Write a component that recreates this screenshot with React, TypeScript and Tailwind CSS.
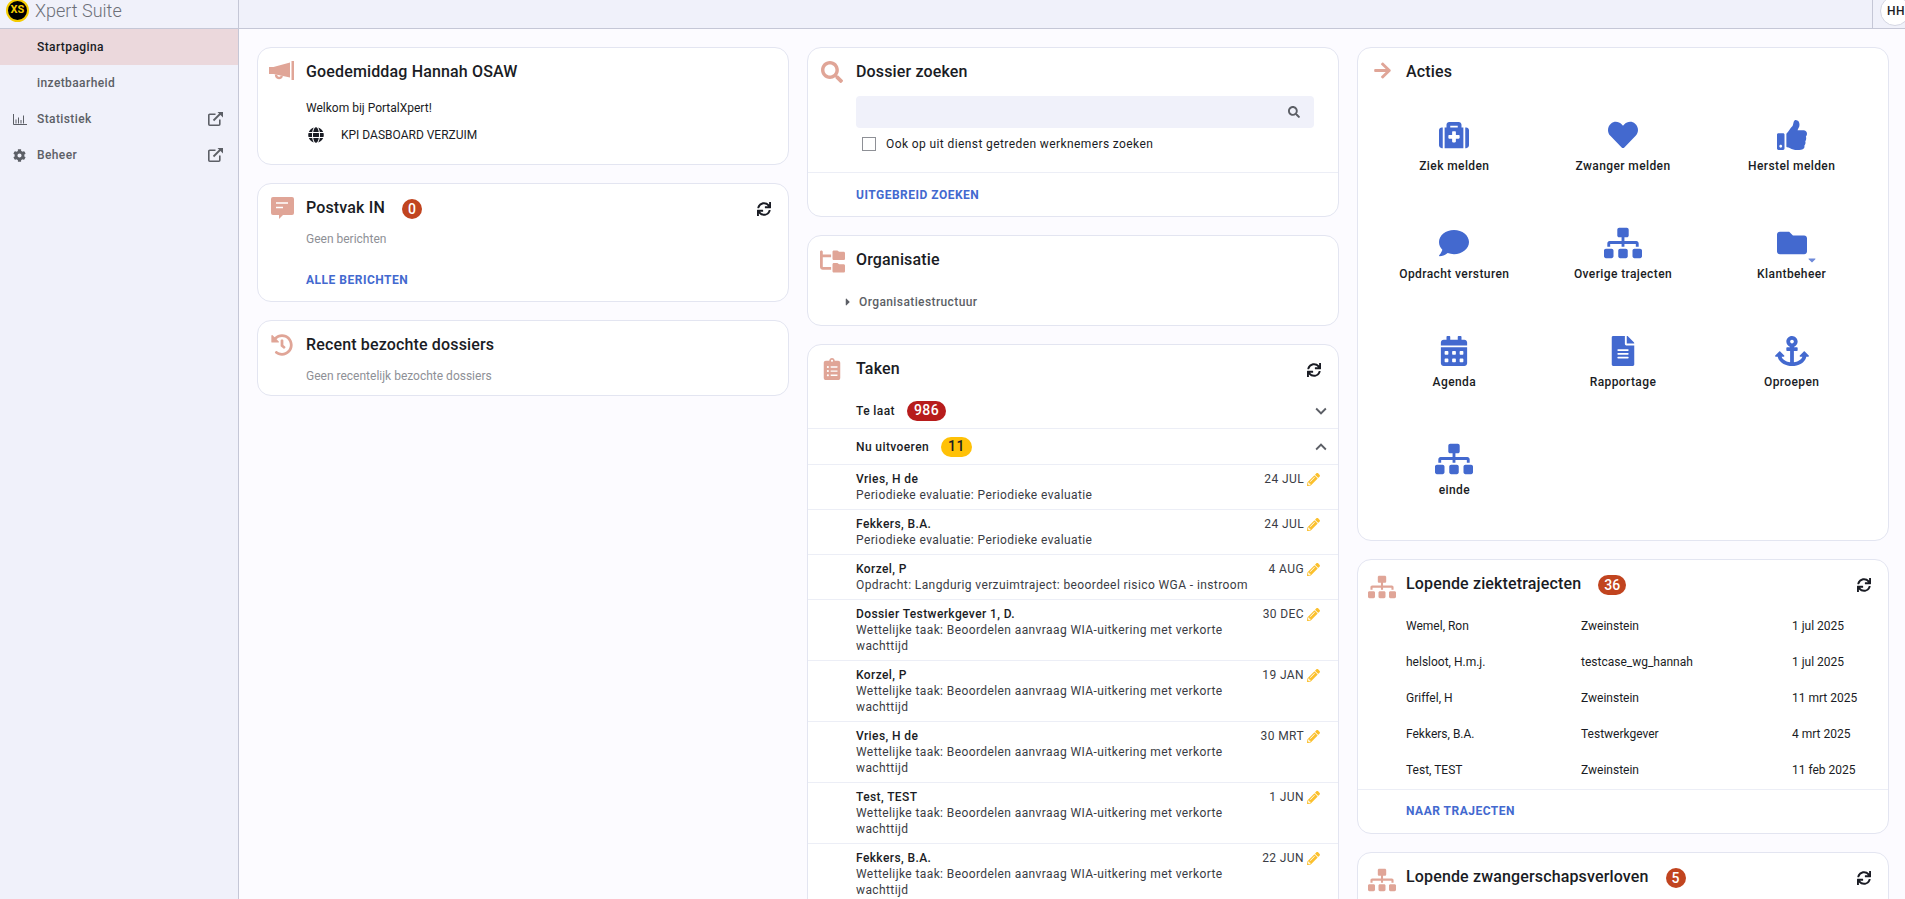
import { FaHistory, FaSearch, FaClipboardList, FaArrowRight, FaSitemap, FaSync, FaMedkit, FaHeart, FaThumbsUp, FaComment, FaFolder, FaCalendarAlt, FaFileAlt, FaAnchor, FaPencilAlt, FaGlobe, FaCog, FaCaretRight, FaCaretDown } from 'react-icons/fa';
import { FaFolderTree } from 'react-icons/fa6';
import { MdKeyboardArrowDown, MdKeyboardArrowUp } from 'react-icons/md';
import type { ReactNode } from 'react';

function Card({ icon, title, badge, refresh, className, children }: { icon: ReactNode; title: string; badge?: string; refresh?: boolean; className?: string; children?: ReactNode }) {
  return (
    <div className={`relative bg-white border border-[#e3e5f1] rounded-[14px] ${className ?? ''}`}>
      <div className="absolute left-0 top-[13px] w-[48px] flex justify-center text-[#e0a597]">{icon}</div>
      <div className="flex items-center h-[24px] ml-[48px] mt-[12px] absolute top-0 left-0">
        <span className="text-[16px] font-medium tracking-[0.15px] text-[#1a1c24] whitespace-nowrap">{title}</span>
        {badge && <span className="relative top-[1px] ml-[17px] h-[20px] px-[6px] min-w-[20px] rounded-[10px] flex items-center justify-center text-[14px] font-medium text-white bg-[#c1441f]">{badge}</span>}
      </div>
      {refresh && <FaSync className="absolute right-[17px] top-[18px] text-[#1a1c24]" size={14} />}
      {children}
    </div>
  );
}

const tasks = [
  ['Vries, H de', 'Periodieke evaluatie: Periodieke evaluatie', '24 JUL'],
  ['Fekkers, B.A.', 'Periodieke evaluatie: Periodieke evaluatie', '24 JUL'],
  ['Korzel, P', 'Opdracht: Langdurig verzuimtraject: beoordeel risico WGA - instroom', '4 AUG'],
  ['Dossier Testwerkgever 1, D.', 'Wettelijke taak: Beoordelen aanvraag WIA-uitkering met verkorte wachttijd', '30 DEC'],
  ['Korzel, P', 'Wettelijke taak: Beoordelen aanvraag WIA-uitkering met verkorte wachttijd', '19 JAN'],
  ['Vries, H de', 'Wettelijke taak: Beoordelen aanvraag WIA-uitkering met verkorte wachttijd', '30 MRT'],
  ['Test, TEST', 'Wettelijke taak: Beoordelen aanvraag WIA-uitkering met verkorte wachttijd', '1 JUN'],
  ['Fekkers, B.A.', 'Wettelijke taak: Beoordelen aanvraag WIA-uitkering met verkorte wachttijd', '22 JUN'],
];

const trajecten = [
  ['Wemel, Ron', 'Zweinstein', '1 jul 2025'],
  ['helsloot, H.m.j.', 'testcase_wg_hannah', '1 jul 2025'],
  ['Griffel, H', 'Zweinstein', '11 mrt 2025'],
  ['Fekkers, B.A.', 'Testwerkgever', '4 mrt 2025'],
  ['Test, TEST', 'Zweinstein', '11 feb 2025'],
];

const acties: [ReactNode, string][] = [
  [<FaMedkit size={30} />, 'Ziek melden'],
  [<FaHeart size={30} />, 'Zwanger melden'],
  [<FaThumbsUp size={30} />, 'Herstel melden'],
  [<FaComment size={30} />, 'Opdracht versturen'],
  [<FaSitemap size={38} className="translate-y-[4px]" />, 'Overige trajecten'],
  [<div className="relative"><FaFolder size={30} /><FaCaretDown size={12} className="absolute -right-[11px] -bottom-[8px] text-[#6f8ad9]" /></div>, 'Klantbeheer'],
  [<FaCalendarAlt size={30} />, 'Agenda'],
  [<FaFileAlt size={30} />, 'Rapportage'],
  [<FaAnchor size={34} className="translate-y-[2px]" />, 'Oproepen'],
  [<FaSitemap size={38} className="translate-y-[4px]" />, 'einde'],
];

// pijl-uit-vak icoon uit de zijbalk
function ExtIcon() {
  return (
    <svg width="15" height="14" viewBox="0 0 15 14" className="absolute right-[15px]" fill="none" stroke="#5c5f66" strokeWidth="1.6">
      <path d="M7.500 2.200H1.800a1 1 0 0 0-1 1v9a1 1 0 0 0 1 1h9a1 1 0 0 0 1-1V7.500" />
      <path d="M5.500 8.500 12.500 1.500" strokeWidth="1.800" />
      <path d="M9.500 0H15v5.500z" fill="#5c5f66" stroke="none" />
    </svg>
  );
}

function ChartIcon() {
  return (
    <svg width="14" height="11" viewBox="0 0 14 11" fill="none" stroke="currentColor" strokeWidth="1">
      <path d="M.5 0v10.500H14" />
      <path d="M3 5.500v4M5.500 3.500v6M8 6v3.500M10.500 1.500v8" />
    </svg>
  );
}

function HornIcon() {
  return (
    <svg width="26" height="20" viewBox="0 0 26 20" fill="currentColor">
      <path d="M0 6h4.500L21 1.500v15L4.500 13H0z" />
      <path d="M22.500 0H25v19h-2.500z" />
      <path d="M6 13.500h2.400c-.3 1.200.3 2.300 1.500 2.300s1.900-.8 1.700-1.400l2.200.5c.1 1.900-1.500 3.300-3.800 3.300C7.300 18.200 5.600 15.800 6 13.500z" />
    </svg>
  );
}

function MessageIcon() {
  return (
    <svg width="23" height="22" viewBox="0 0 23 22">
      <path d="M2 0h19a2 2 0 0 1 2 2v14a2 2 0 0 1-2 2H12l-4 4v-4H2a2 2 0 0 1-2-2V2a2 2 0 0 1 2-2z" fill="currentColor" />
      <path d="M5 6h12M5 10.500h7" stroke="#fff" strokeWidth="1.600" />
    </svg>
  );
}

function NavItem({ label, icon, active, ext }: { label: string; icon?: ReactNode; active?: boolean; ext?: boolean }) {
  return (
    <div className={`relative h-[36px] flex items-center pl-[37px] text-[12px] font-medium tracking-[0.4px] ${active ? 'bg-[#ebd8dc] text-[#1a1c24]' : 'text-[#5c5f66]'}`}>
      {icon && <span className="absolute left-[13px] text-[#5c5f66]">{icon}</span>}
      {label}
      {ext && <ExtIcon />}
    </div>
  );
}

export default function App() {
  return (
    <div className="relative w-[1905px] h-[899px] overflow-hidden bg-[#fcfbff] [font-family:Roboto,sans-serif]">
      {/* bovenbalk */}
      <div className="absolute left-0 top-0 w-full h-[29px] bg-[#f0f1fa] border-b border-[#c5c7d6] overflow-hidden">
        <div className="absolute left-[6px] -top-[1px] w-[23px] h-[23px] rounded-full bg-black border-2 border-[#f5cc00] flex items-center justify-center text-[11px] font-bold text-[#f5cc00]">XS</div>
        <span className="absolute left-[35px] -top-[1px] text-[18px] font-light text-[#6d7078] leading-[24px]">Xpert Suite</span>
        <div className="absolute left-[238px] top-0 h-[28px] border-l border-[#c5c7d6]" />
        <div className="absolute left-[1872px] top-0 h-[28px] border-l border-[#c5c7d6]" />
        <div className="absolute left-[1880px] -top-[4px] w-[30px] h-[30px] rounded-full bg-white border border-[#d5d7e3] flex items-center pl-[6px] text-[12px] font-medium tracking-[0.4px] text-[#1a1c24]">HH</div>
      </div>

      {/* zijbalk */}
      <div className="absolute left-0 top-[29px] w-[239px] bottom-0 bg-[#f0f1fa] border-r border-[#c5c7d6]">
        <NavItem label="Startpagina" active />
        <NavItem label="inzetbaarheid" />
        <NavItem label="Statistiek" icon={<ChartIcon />} ext />
        <NavItem label="Beheer" icon={<FaCog size={13} />} ext />
      </div>

      {/* kolom 1 */}
      <div className="absolute left-[257px] top-[47px] w-[532px] flex flex-col gap-[18px]">
        <Card icon={<HornIcon />} title="Goedemiddag Hannah OSAW" className="h-[118px]">
          <div className="absolute left-[48px] top-[51px] text-[12px] text-[#1a1c24]">Welkom bij PortalXpert!</div>
          <div className="absolute left-[50px] top-[78px] flex items-center text-[12px] text-[#1a1c24]">
            <FaGlobe size={16} className="mr-[17px]" />KPI DASBOARD VERZUIM
          </div>
        </Card>
        <Card icon={<MessageIcon />} title="Postvak IN" badge="0" refresh className="h-[119px]">
          <div className="absolute left-[48px] top-[46px] text-[12px] text-[#8e9096]">Geen berichten</div>
          <div className="absolute left-[48px] top-[87px] text-[12px] font-bold tracking-[0.5px] text-[#4369cf]">ALLE BERICHTEN</div>
        </Card>
        <Card icon={<FaHistory size={22} />} title="Recent bezochte dossiers" className="h-[76px]">
          <div className="absolute left-[48px] top-[46px] text-[12px] text-[#8e9096]">Geen recentelijk bezochte dossiers</div>
        </Card>
      </div>

      {/* kolom 2 */}
      <div className="absolute left-[807px] top-[47px] w-[532px] flex flex-col gap-[18px]">
        <Card icon={<FaSearch size={22} />} title="Dossier zoeken" className="h-[170px]">
          <div className="absolute left-[48px] right-[24px] top-[48px] h-[32px] rounded-[4px] bg-[#f0f1fa]">
            <FaSearch size={12} className="absolute right-[14px] top-[10px] text-[#5c5f66]" />
          </div>
          <div className="absolute left-[54px] top-[87px] flex items-center text-[12px] text-[#1a1c24] tracking-[0.4px]">
            <span className="w-[14px] h-[14px] bg-white border border-[#8e9096] mr-[10px]" />Ook op uit dienst getreden werknemers zoeken
          </div>
          <div className="absolute left-0 right-0 top-[124px] border-t border-[#eceef6]" />
          <div className="absolute left-[48px] top-[138px] text-[12px] font-bold tracking-[0.5px] text-[#4369cf]">UITGEBREID ZOEKEN</div>
        </Card>
        <Card icon={<FaFolderTree size={25} />} title="Organisatie" className="h-[91px]">
          <div className="absolute left-[34px] top-[57px] flex items-center text-[12px] font-medium tracking-[0.4px] text-[#5c5f66]">
            <FaCaretRight size={12} className="mr-[5px]" />Organisatiestructuur
          </div>
        </Card>
        <Card icon={<FaClipboardList size={22} />} title="Taken" refresh className="h-[600px]">
          <div className="absolute left-0 right-0 top-[48px]">
            <div className="relative h-[36px] flex items-center pl-[48px] border-b border-[#eceef6] text-[12px] font-medium tracking-[0.4px] text-[#1a1c24]">
              Te laat
              <span className="ml-[12px] h-[20px] px-[7px] rounded-[10px] bg-[#b71c1c] text-white text-[14px] font-medium flex items-center">986</span>
              <MdKeyboardArrowDown size={22} className="absolute right-[6px] text-[#5c5f66]" />
            </div>
            <div className="relative h-[36px] flex items-center pl-[48px] border-b border-[#eceef6] text-[12px] font-medium tracking-[0.4px] text-[#1a1c24]">
              Nu uitvoeren
              <span className="ml-[12px] h-[20px] px-[7px] rounded-[10px] bg-[#ffc107] text-[#1a1c24] text-[14px] flex items-center">11</span>
              <MdKeyboardArrowUp size={22} className="absolute right-[6px] text-[#5c5f66]" />
            </div>
            {tasks.map((t, i) => (
              <div key={i} className="relative pl-[48px] pr-[18px] pt-[6px] pb-[6px] border-b border-[#eceef6] text-[12px] leading-[16px] tracking-[0.4px]">
                <div className="font-medium text-[#1a1c24]">{t[0]}</div>
                <div className="text-[#3a3c44] w-[405px]">{t[1]}</div>
                <div className="absolute right-[18px] top-[6px] flex items-center text-[#3a3c44]">{t[2]}<FaPencilAlt size={13} className="ml-[3px] text-[#fbc02d]" /></div>
              </div>
            ))}
          </div>
        </Card>
      </div>

      {/* kolom 3 */}
      <div className="absolute left-[1357px] top-[47px] w-[532px] flex flex-col gap-[18px]">
        <Card icon={<FaArrowRight size={19} />} title="Acties" className="h-[494px]">
          <div className="absolute left-0 right-0 top-[52px] grid grid-cols-3 px-[12px]">
            {acties.map(([icon, label], i) => (
              <div key={i} className="h-[108px] flex flex-col items-center text-[#4369cf]">
                <div className="h-[50px] flex items-end">{icon}</div>
                <div className="mt-[7px] text-[12px] font-medium tracking-[0.4px] text-[#1a1c24]">{label}</div>
              </div>
            ))}
          </div>
        </Card>
        <Card icon={<FaSitemap size={28} />} title="Lopende ziektetrajecten" badge="36" refresh className="h-[275px]">
          <div className="absolute left-[48px] right-0 top-[48px]">
            {trajecten.map((r, i) => (
              <div key={i} className="relative h-[36px] flex items-center text-[12px] text-[#1a1c24]">
                <span className="absolute left-0">{r[0]}</span>
                <span className="absolute left-[175px]">{r[1]}</span>
                <span className="absolute left-[386px]">{r[2]}</span>
              </div>
            ))}
          </div>
          <div className="absolute left-0 right-0 top-[229px] border-t border-[#eceef6]" />
          <div className="absolute left-[48px] top-[242px] text-[12px] font-bold tracking-[0.5px] text-[#4369cf]">NAAR TRAJECTEN</div>
        </Card>
        <Card icon={<FaSitemap size={28} />} title="Lopende zwangerschapsverloven" badge="5" refresh className="h-[200px]" />
      </div>
    </div>
  );
}
